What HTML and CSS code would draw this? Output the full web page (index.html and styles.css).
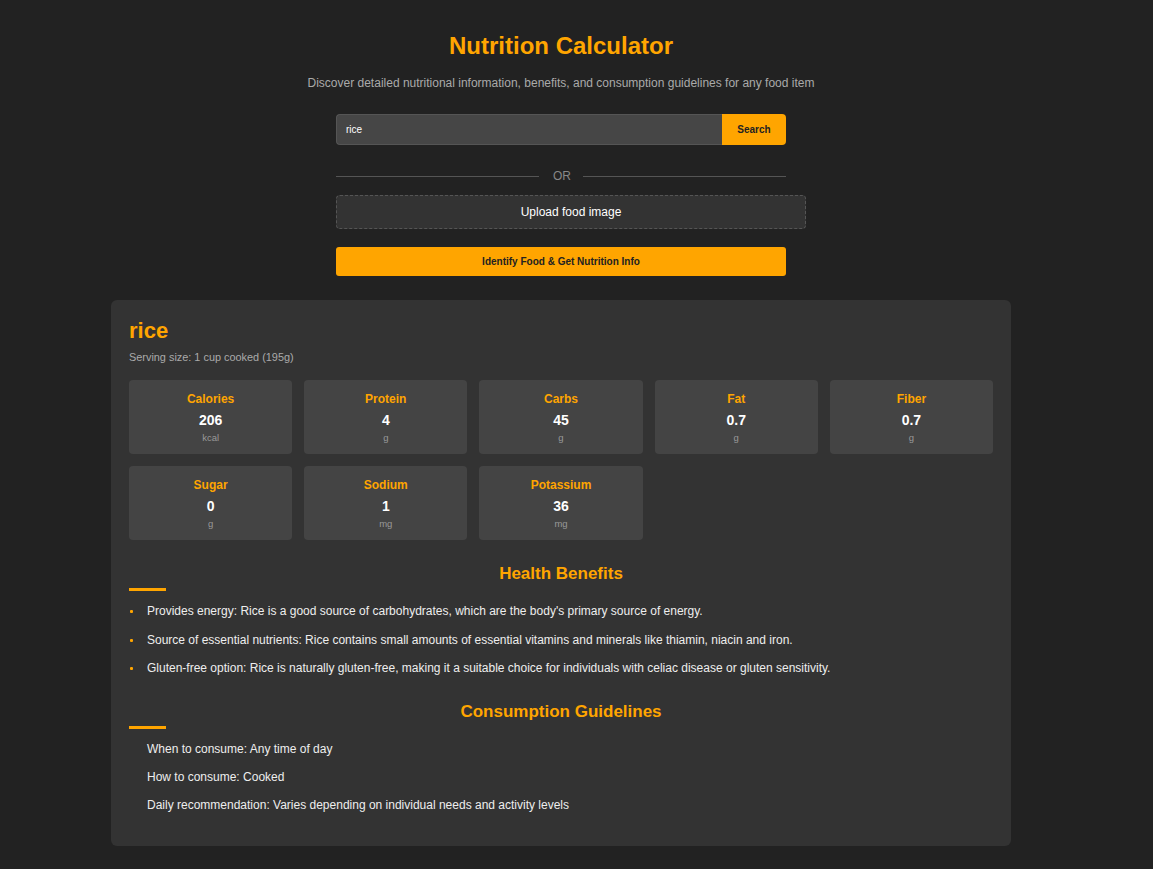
FILE: index.html
```html
<!DOCTYPE html>
<html lang="en">
<head>
<meta charset="utf-8">
<title>Nutrition Calculator</title>
<link rel="stylesheet" href="styles.css">
</head>
<body>
<div class="page">
  <header class="header">
    <h1 class="title">Nutrition Calculator</h1>
    <p class="subtitle">Discover detailed nutritional information, benefits, and consumption guidelines for any food item</p>
  </header>

  <div class="controls">
    <div class="search">
      <input class="search-input" type="text" value="rice">
      <button class="search-btn">Search</button>
    </div>
    <div class="divider"><span>OR</span></div>
    <div class="upload">Upload food image</div>
    <button class="identify-btn">Identify Food &amp; Get Nutrition Info</button>
  </div>

  <section class="card">
    <h2 class="food-name">rice</h2>
    <p class="serving">Serving size: 1 cup cooked (195g)</p>

    <div class="grid">
      <div class="cell"><div class="label">Calories</div><div class="value">206</div><div class="unit">kcal</div></div>
      <div class="cell"><div class="label">Protein</div><div class="value">4</div><div class="unit">g</div></div>
      <div class="cell"><div class="label">Carbs</div><div class="value">45</div><div class="unit">g</div></div>
      <div class="cell"><div class="label">Fat</div><div class="value">0.7</div><div class="unit">g</div></div>
      <div class="cell"><div class="label">Fiber</div><div class="value">0.7</div><div class="unit">g</div></div>
      <div class="cell"><div class="label">Sugar</div><div class="value">0</div><div class="unit">g</div></div>
      <div class="cell"><div class="label">Sodium</div><div class="value">1</div><div class="unit">mg</div></div>
      <div class="cell"><div class="label">Potassium</div><div class="value">36</div><div class="unit">mg</div></div>
    </div>

    <h3 class="section-title">Health Benefits</h3>
    <ul class="benefits">
      <li>Provides energy: Rice is a good source of carbohydrates, which are the body's primary source of energy.</li>
      <li>Source of essential nutrients: Rice contains small amounts of essential vitamins and minerals like thiamin, niacin and iron.</li>
      <li>Gluten-free option: Rice is naturally gluten-free, making it a suitable choice for individuals with celiac disease or gluten sensitivity.</li>
    </ul>

    <h3 class="section-title section-title--second">Consumption Guidelines</h3>
    <ul class="guidelines">
      <li>When to consume: Any time of day</li>
      <li>How to consume: Cooked</li>
      <li>Daily recommendation: Varies depending on individual needs and activity levels</li>
    </ul>
  </section>
</div>
</body>
</html>
```

FILE: styles.css
```css
* { box-sizing: border-box; }

html, body {
  margin: 0;
  padding: 0;
  background: #222222;
  color: #eeeeee;
  font-family: "Liberation Sans", Arial, sans-serif;
}

.page {
  width: 1122px;
  padding: 20px 0 24px;
}

.header {
  text-align: center;
}

.title {
  margin: 12px 0 0;
  font-size: 24px;
  line-height: 28px;
  font-weight: bold;
  color: #ffa500;
}

.subtitle {
  margin: 15px 0 0;
  font-size: 12px;
  line-height: 16px;
  color: #aaaaaa;
}

.controls {
  width: 450px;
  margin: 23px auto 0;
}

.search {
  display: flex;
  height: 31px;
}

.search-input {
  flex: 1;
  min-width: 0;
  height: 31px;
  background: #464646;
  border: 1px solid #555555;
  border-right: none;
  border-radius: 4px 0 0 4px;
  color: #ffffff;
  font-family: inherit;
  font-size: 10px;
  padding: 0 9px;
  outline: none;
}

.search-btn {
  width: 64px;
  height: 31px;
  background: #ffa500;
  border: none;
  border-radius: 0 4px 4px 0;
  color: #222222;
  font-family: inherit;
  font-size: 10px;
  font-weight: bold;
  padding: 0;
}

.divider {
  display: flex;
  align-items: center;
  margin-top: 24px;
  height: 14px;
  color: #888888;
  font-size: 12px;
}

.divider::before,
.divider::after {
  content: "";
  flex: 1;
  height: 1px;
  background: #555555;
}

.divider span {
  padding: 0 12px;
  margin-left: 2px;
}

.upload {
  margin-top: 12px;
  width: 470px;
  height: 34px;
  display: flex;
  align-items: center;
  justify-content: center;
  background: #333333;
  border: 1px dashed #555555;
  border-radius: 4px;
  color: #ffffff;
  font-size: 12px;
}

.identify-btn {
  display: block;
  width: 450px;
  height: 29px;
  margin-top: 18px;
  background: #ffa500;
  border: none;
  border-radius: 3px;
  color: #222222;
  font-family: inherit;
  font-size: 10px;
  font-weight: bold;
  padding: 0;
}

.card {
  width: 900px;
  margin: 24px 0 0 111px;
  background: #333333;
  border-radius: 6px;
  padding: 18px 18px 33px;
}

.food-name {
  margin: 0;
  font-size: 22px;
  line-height: 26px;
  color: #ffa500;
  font-weight: bold;
}

.serving {
  margin: 6px 0 0;
  font-size: 10.9px;
  line-height: 14px;
  color: #aaaaaa;
}

.grid {
  display: grid;
  grid-template-columns: repeat(5, 1fr);
  gap: 12px;
  margin-top: 16px;
}

.cell {
  height: 74px;
  background: #444444;
  border-radius: 4px;
  text-align: center;
  padding-top: 12px;
}

.label {
  font-size: 12px;
  line-height: 15px;
  font-weight: bold;
  color: #ffa500;
}

.value {
  margin-top: 5px;
  font-size: 14px;
  line-height: 17px;
  font-weight: bold;
  color: #ffffff;
}

.unit {
  margin-top: 3px;
  font-size: 9.5px;
  line-height: 11px;
  color: #999999;
}

.section-title {
  position: relative;
  margin: 24px 0 0;
  padding-bottom: 7px;
  text-align: center;
  font-size: 17px;
  line-height: 20px;
  font-weight: bold;
  color: #ffa500;
}

.section-title--second {
  margin-top: 26px;
}

.section-title::after {
  content: "";
  position: absolute;
  left: 0;
  bottom: 0;
  width: 37px;
  height: 3px;
  background: #ffa500;
}

.benefits,
.guidelines {
  list-style: none;
  margin: 12px 0 0;
  padding: 0;
}

.benefits li,
.guidelines li {
  position: relative;
  padding-left: 18px;
  font-size: 12px;
  line-height: 16px;
  margin-bottom: 12.5px;
  color: #eeeeee;
}

.guidelines li {
  margin-bottom: 12px;
}

.benefits li::before {
  content: "";
  position: absolute;
  left: 1px;
  top: 7px;
  width: 3px;
  height: 3px;
  border-radius: 1px;
  background: #ffa500;
}

.benefits li:last-child,
.guidelines li:last-child {
  margin-bottom: 0;
}
```
